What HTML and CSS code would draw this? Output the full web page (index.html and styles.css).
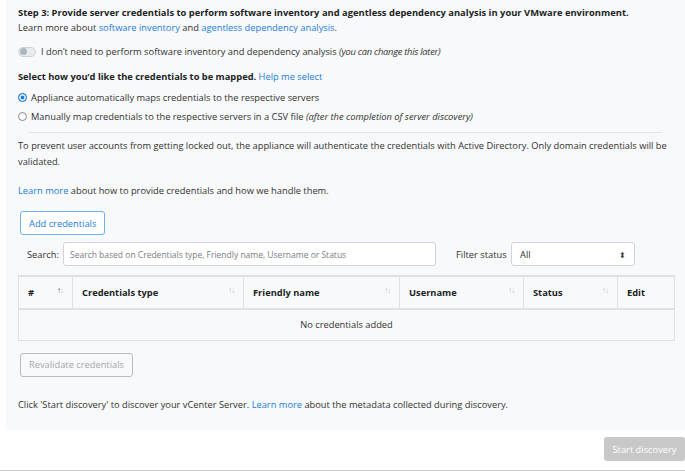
FILE: index.html
```html
<!DOCTYPE html>
<html lang="en">
<head>
<meta charset="utf-8">
<title>Provide server credentials</title>
<link rel="stylesheet" href="styles.css">
</head>
<body>
<div class="page">
  <section class="panel">
    <p class="title">Step 3: Provide server credentials to perform software inventory and agentless dependency analysis in your VMware environment.</p>
    <p class="line">Learn more about <a href="#">software inventory</a> and <a href="#">agentless dependency analysis</a>.</p>

    <label class="toggle-row">
      <span class="switch"><span class="knob"></span></span>
      <span>I don’t need to perform software inventory and dependency analysis <em>(you can change this later)</em></span>
    </label>

    <p class="subtitle"><b>Select how you’d like the credentials to be mapped.</b> <a href="#">Help me select</a></p>
    <label class="radio-row first"><span class="radio checked"></span><span>Appliance automatically maps credentials to the respective servers</span></label>
    <label class="radio-row"><span class="radio"></span><span>Manually map credentials to the respective servers in a CSV file <em>(after the completion of server discovery)</em></span></label>

    <hr class="divider">

    <p class="para">To prevent user accounts from getting locked out, the appliance will authenticate the credentials with Active Directory. Only domain credentials will be validated.</p>
    <p class="para learn"><a href="#">Learn more</a> about how to provide credentials and how we handle them.</p>

    <button class="btn btn-outline">Add credentials</button>

    <div class="search-row">
      <span class="search-label">Search:</span>
      <input class="search-input" type="text" placeholder="Search based on Credentials type, Friendly name, Username or Status">
      <span class="filter-label">Filter status</span>
      <span class="select">All<span class="caret">⬍</span></span>
    </div>

    <table class="grid">
      <colgroup>
        <col class="c1"><col class="c2"><col class="c3"><col class="c4"><col class="c5"><col class="c6">
      </colgroup>
      <thead>
        <tr>
          <th><span class="th">#<span class="sort"><i class="dark">↑</i><i>↓</i></span></span></th>
          <th><span class="th">Credentials type<span class="sort"><i>↑</i><i>↓</i></span></span></th>
          <th><span class="th">Friendly name<span class="sort"><i>↑</i><i>↓</i></span></span></th>
          <th><span class="th">Username<span class="sort"><i>↑</i><i>↓</i></span></span></th>
          <th><span class="th">Status<span class="sort"><i>↑</i><i>↓</i></span></span></th>
          <th><span class="th">Edit</span></th>
        </tr>
      </thead>
      <tbody>
        <tr><td colspan="6" class="empty">No credentials added</td></tr>
      </tbody>
    </table>

    <button class="btn btn-disabled">Revalidate credentials</button>

    <p class="para footer-note">Click 'Start discovery' to discover your vCenter Server. <a href="#">Learn more</a> about the metadata collected during discovery.</p>
  </section>

  <div class="actions">
    <button class="btn btn-start">Start discovery</button>
  </div>
</div>
</body>
</html>
```

FILE: styles.css
```css
* { box-sizing: border-box; }
html, body { margin: 0; padding: 0; background: #fff; }
body {
  font-family: "Segoe UI", "Open Sans", "Noto Sans", sans-serif;
  font-size: 9.3px;
  color: #323130;
  width: 685px;
  height: 472px;
  overflow: hidden;
}
a { color: #1a7be0; text-decoration: none; }
p { margin: 0; }

.page { display: flex; flex-direction: column; height: 472px; }

.panel {
  margin-left: 6px;
  background: #f8f9fa;
  padding: 5px 11px 14px 12px;
  height: 430px;
}

.title { font-weight: 700; line-height: 15px; color: #201f1e; font-size: 9.4px; }
.line { line-height: 15px; }

.toggle-row { display: flex; align-items: center; gap: 5px; margin-top: 9px; line-height: 15px; }
.toggle-row em { letter-spacing: -0.25px; }
.switch {
  width: 18px; height: 10px; border-radius: 5px;
  background: #e9ecef; border: 1px solid #cfd3d7;
  display: flex; align-items: center; padding: 1px;
}
.knob { width: 7px; height: 7px; border-radius: 50%; background: #adb5bd; }

.subtitle { margin-top: 10px; line-height: 15px; color: #201f1e; }
.radio-row { display: flex; align-items: center; gap: 4px; line-height: 15px; margin-top: 4px; }
.radio-row.first { margin-top: 6px; }
.radio {
  width: 9px; height: 9px; border-radius: 50%;
  border: 1px solid #8a8886; background: #fff; flex: none;
}
.radio.checked { border-color: #1a7be0; background: #1a7be0; box-shadow: inset 0 0 0 1.5px #fff; }

.divider { border: 0; border-top: 1px solid #e1e3e5; margin: 8px 12px 5px 10px; }

.para { line-height: 16px; }
.learn { margin-top: 13px; }

.btn {
  font-family: inherit; font-size: 9.3px; white-space: nowrap;
  height: 24px; border-radius: 3px; padding: 0 8px;
  display: inline-flex; align-items: center; justify-content: center;
}
.btn-outline { margin: 12px 0 0 2px; border: 1px solid #6fb0f5; color: #1a7be0; background: #fff; min-width: 85px; }
.btn-disabled { margin: 12px 0 0 2px; border: 1px solid #b9bcbf; color: #a4a7aa; background: #f8f9fa; min-width: 111px; }

.search-row { display: flex; align-items: center; margin-top: 7px; height: 24px; }
.search-label { margin-left: 9px; width: 36px; }
.search-input {
  width: 373px; height: 24px; border: 1px solid #ced4da; border-radius: 3px;
  font-family: inherit; font-size: 8.5px; padding: 0 6px; background: #fff; color: #323130;
}
.search-input::placeholder { color: #7a7d80; }
.filter-label { margin-left: 20px; width: 55px; }
.select {
  width: 124px; height: 24px; border: 1px solid #ced4da; border-radius: 3px; background: #fff;
  display: flex; align-items: center; justify-content: space-between; padding: 0 8px;
}
.caret { font-size: 8px; color: #444; }

.grid {
  margin-top: 9px; width: 656px; border-collapse: collapse; table-layout: fixed;
  border: 1px solid #dee2e6; border-top-width: 2px;
}
.c1 { width: 54px; } .c2 { width: 171px; } .c3 { width: 156px; }
.c4 { width: 124px; } .c5 { width: 94px; } .c6 { width: 57px; }
.grid th {
  height: 33px; text-align: left; font-weight: 700; color: #201f1e;
  border: 1px solid #dee2e6; border-bottom-width: 2px; padding: 0 8px 0 9px;
}
.th { display: flex; justify-content: space-between; align-items: center; }
.sort { display: flex; font-weight: 400; color: #c4c6c8; font-size: 8px; margin-top: -6px; }
.sort i { font-style: normal; margin-left: -1px; }
.sort i.dark { color: #555; }
.grid td.empty { height: 31px; text-align: center; border: 1px solid #dee2e6; }

.footer-note { margin-top: 20px; }

.actions { display: flex; justify-content: flex-end; padding-top: 7px; flex: 1; border-bottom: 1px solid #c8c8c8; margin-bottom: 1px; }
.btn-start { border: 0; background: #c8c8c8; color: #fff; min-width: 81px; padding: 0 8px; }
```
